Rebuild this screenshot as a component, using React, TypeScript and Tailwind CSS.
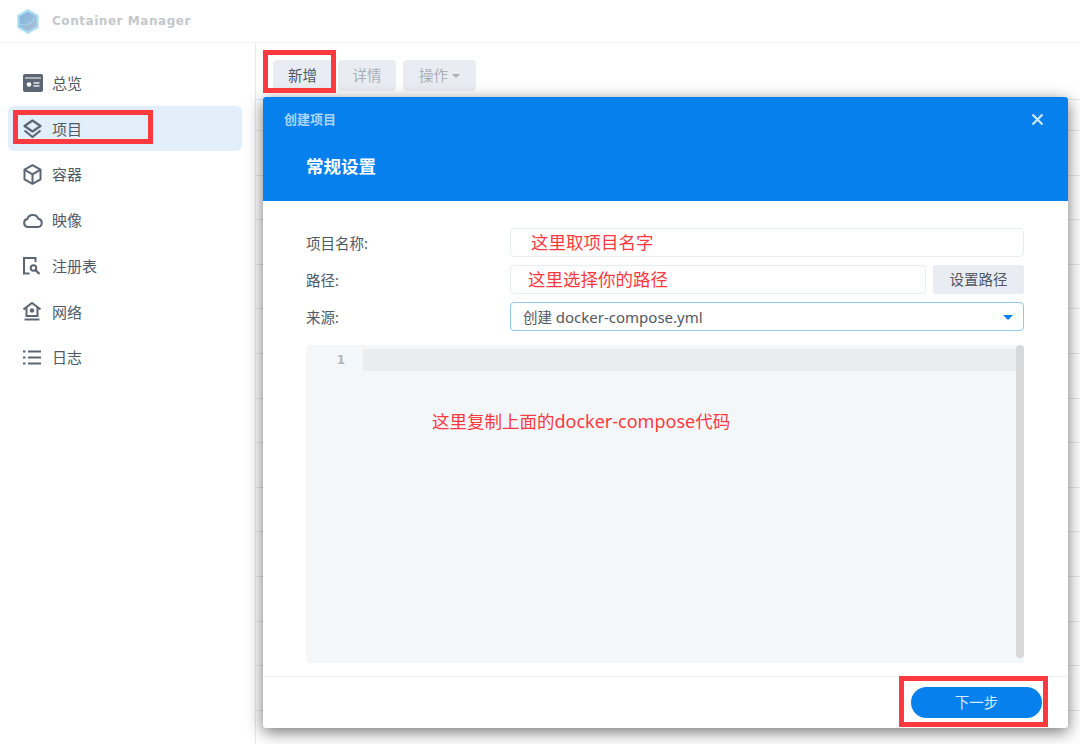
const cjk = '[font-family:"Noto_Sans","Noto_Sans_CJK_SC",sans-serif]';

function OverviewIcon() {
  return (
    <svg width="20" height="18" viewBox="0 0 20 18">
      <rect width="20" height="18" rx="2" fill="#5b6573" />
      <rect x="2" y="3.500" width="16" height="1" fill="#fff" />
      <circle cx="6" cy="10.500" r="2.300" fill="#fff" />
      <rect x="10.500" y="8.300" width="6" height="1.300" fill="#fff" />
      <rect x="10.500" y="11.300" width="6" height="1.300" fill="#fff" />
    </svg>
  );
}

function LayersIcon() {
  return (
    <svg width="19" height="20" viewBox="0 0 19 20" fill="none" stroke="#5b6573" strokeWidth="2.200" strokeLinejoin="round">
      <path d="M9.500 1.500l8 5.500-8 5.500-8-5.500z" />
      <path d="M1.500 11.500l8 6.500 8-6.500" />
    </svg>
  );
}

function BoxIcon() {
  return (
    <svg width="19" height="21" viewBox="0 0 19 21" fill="none" stroke="#5b6573" strokeWidth="2" strokeLinejoin="round">
      <path d="M9.500 1.200l8 4.500v9.600l-8 4.500-8-4.500V5.700z" />
      <path d="M1.800 5.900l7.700 4.500 7.700-4.500M9.500 10.400v9.400" />
    </svg>
  );
}

function CloudIcon() {
  return (
    <svg width="20" height="15" viewBox="0 0 20 15" fill="none" stroke="#5b6573" strokeWidth="2" strokeLinejoin="round">
      <path d="M5 14a4 4 0 0 1-.7-7.900 5.800 5.800 0 0 1 11-.4A4.200 4.200 0 0 1 15 14z" />
    </svg>
  );
}

function RegistryIcon() {
  return (
    <svg width="18" height="18" viewBox="0 0 18 18" fill="none" stroke="#5b6573" strokeWidth="2">
      <path d="M6.500 16.500H1V1h11.500v4" />
      <circle cx="10.500" cy="11" r="2.800" />
      <path d="M12.500 13.200l4 3.800" strokeWidth="2.400" />
    </svg>
  );
}

function NetworkIcon() {
  return (
    <svg width="18" height="19" viewBox="0 0 18 19" fill="none" stroke="#5b6573" strokeWidth="2">
      <path d="M.500 7.500L9 1l8.500 6.500" />
      <path d="M3.500 6v8h11V6" />
      <circle cx="9" cy="8.500" r="2.200" fill="#5b6573" stroke="none" />
      <path d="M1.500 17.500h15" />
    </svg>
  );
}

function ListIcon() {
  return (
    <svg width="18" height="15" viewBox="0 0 18 15" fill="#5b6573">
      <rect x="0" y="0.500" width="2.500" height="2" />
      <rect x="5" y="0.500" width="13" height="2" />
      <rect x="0" y="6.500" width="2.500" height="2" />
      <rect x="5" y="6.500" width="13" height="2" />
      <rect x="0" y="12.500" width="2.500" height="2" />
      <rect x="5" y="12.500" width="13" height="2" />
    </svg>
  );
}

function Logo() {
  return (
    <svg width="22" height="25" viewBox="0 0 24 28" opacity="0.75">
      <defs>
        <linearGradient id="hexFill" x1="0" y1="0" x2="1" y2="1">
          <stop offset="0" stopColor="#4f9fd6" />
          <stop offset="1" stopColor="#9aa9c4" />
        </linearGradient>
      </defs>
      <path d="M12 0l12 7v14l-12 7L0 21V7z" fill="#8fd3f0" />
      <path d="M12 3l9.500 5.500v11L12 25l-9.500-5.500v-11z" fill="url(#hexFill)" />
      <path d="M3 17c6 2 13 0 17-7" fill="none" stroke="#7fc4e4" strokeWidth="1.500" />
    </svg>
  );
}

const navItems = [
  { label: '总览', icon: <OverviewIcon /> },
  { label: '项目', icon: <LayersIcon />, active: true },
  { label: '容器', icon: <BoxIcon /> },
  { label: '映像', icon: <CloudIcon /> },
  { label: '注册表', icon: <RegistryIcon /> },
  { label: '网络', icon: <NetworkIcon /> },
  { label: '日志', icon: <ListIcon /> },
];

const rowLines = Array.from({ length: 14 }, (_, i) => i);

export default function App() {
  return (
    <div className={`relative flex h-[744px] w-[1080px] flex-col overflow-hidden bg-white ${cjk}`}>
      {/* title bar */}
      <header className="flex h-[43px] shrink-0 items-center gap-[13px] border-b border-[#f1f2f4] pl-[17px]">
        <Logo />
        <span className="font-['DejaVu_Sans'] text-[12px] font-bold tracking-[0.55px] text-[#c4c8cd]">Container Manager</span>
      </header>

      <div className="flex min-h-0 flex-1">
        {/* sidebar */}
        <aside className="flex w-[256px] shrink-0 flex-col border-r border-[#e6e8eb] pt-[17px] pl-[8px] pr-[13px]">
          {navItems.map((item) => (
            <div
              key={item.label}
              className={`flex h-[45.7px] items-center rounded-[6px] pl-[15px] pt-[1px] text-[15px] text-[#4f5965] ${item.active ? 'bg-[#e3eefb]' : ''}`}
            >
              <span className="flex w-[29px] shrink-0 items-center">{item.icon}</span>
              {item.label}
            </div>
          ))}
        </aside>

        {/* list behind the dialog */}
        <main className="min-w-0 flex-1">
          <div className="flex h-[57px] items-start border-b border-[#e6e8eb] pl-[17px] pt-[17px] text-[14.5px]">
            <button className="h-[31px] w-[59px] rounded-[4px] bg-[#e9edf3] text-[#4f5965]">新增</button>
            <button className="ml-[6px] h-[31px] w-[58px] rounded-[4px] bg-[#e9edf3] text-[#a9afb8]">详情</button>
            <button className="ml-[7px] flex h-[31px] w-[73px] items-center justify-center gap-[4px] rounded-[4px] bg-[#e9edf3] text-[#a9afb8]">
              操作
              <span className="h-0 w-0 border-x-[4px] border-t-[4px] border-x-transparent border-t-[#a9afb8]" />
            </button>
          </div>
          <div className="h-[31px] border-b border-[#e6e8eb]" />
          {rowLines.map((n) => (
            <div key={n} className="h-[44.6px] border-b border-[#e6e8eb]" />
          ))}
        </main>
      </div>

      {/* dialog */}
      <section className="absolute left-[263px] top-[97px] flex h-[631px] w-[805px] flex-col overflow-hidden rounded-[3px] bg-white shadow-[0_4px_16px_rgba(0,0,0,0.55)]">
        <div className="relative h-[104px] shrink-0 bg-[#0580ed] pl-[21px] pt-[13px] text-white">
          <div className="text-[13px] font-semibold leading-[18px] text-[#a9d5fb]">创建项目</div>
          <div className="mt-[26px] pl-[22px] text-[17.5px] font-bold leading-[24px]">常规设置</div>
          <svg className="absolute right-[24px] top-[16px]" width="13" height="13" viewBox="0 0 13 13" stroke="#cfe6fc" strokeWidth="2.200">
            <path d="M1.500 1.500l10 10M11.500 1.500l-10 10" />
          </svg>
        </div>

        <div className="flex min-h-0 flex-1 flex-col pl-[43px] pr-[44px] pt-[27px] text-[14.5px] text-[#4f5965]">
          <div className="flex h-[29px] items-center">
            <label className="w-[204px] shrink-0 pt-[2px]">项目名称:</label>
            <div className="flex h-full flex-1 items-center rounded-[4px] border border-[#e8edf3] pl-[20px] text-[17.5px] text-[#fb3a3f]">这里取项目名字</div>
          </div>
          <div className="mt-[8px] flex h-[29px] items-center">
            <label className="w-[204px] shrink-0 pt-[2px]">路径:</label>
            <div className="flex h-full flex-1 items-center rounded-[4px] border border-[#e8edf3] pl-[17px] text-[17.5px] text-[#fb3a3f]">这里选择你的路径</div>
            <button className="ml-[7px] h-full w-[91px] rounded-[3px] bg-[#e9edf3] pt-[1px]">设置路径</button>
          </div>
          <div className="mt-[8px] flex h-[29px] items-center">
            <label className="w-[204px] shrink-0 pt-[3px]">来源:</label>
            <div className="flex h-full flex-1 items-center justify-between rounded-[4px] border border-[#8fc7f5] pl-[12px] pr-[10px] pt-[1px]">
              <span>
                创建 <span className="text-[15px]">docker-compose.yml</span>
              </span>
              <span className="h-0 w-0 border-x-[5px] border-t-[5px] border-x-transparent border-t-[#0580ed]" />
            </div>
          </div>

          {/* compose editor */}
          <div className="relative mt-[14px] h-[318px] rounded-[4px] bg-[#f4f7fa] pt-[4px]">
            <div className="flex h-[22px]">
              <span className="flex w-[39px] items-center justify-end font-['DejaVu_Sans'] text-[12px] font-bold text-[#b0b5bb]">1</span>
              <div className="ml-[18px] flex-1 bg-[#ebecee]" />
            </div>
            <div className="pl-[126px] pt-[38px] text-[17.5px] leading-[24px] text-[#fb3a3f]">
              这里复制上面的<span className="text-[18px]">docker-compose</span>代码
            </div>
            <div className="absolute right-0 top-0 h-[313px] w-[8px] rounded-[4px] bg-[#d6d8da]" />
          </div>
        </div>

        <div className="flex h-[52px] shrink-0 items-center justify-end border-t border-[#edf0f4] pr-[26px]">
          <button className="h-[31px] w-[131px] rounded-full bg-[#0580ed] text-[14.5px] text-[#d6eafd]">下一步</button>
        </div>
      </section>

      {/* red annotation boxes */}
      <div className="absolute left-[263px] top-[50px] h-[43px] w-[73px] border-[5px] border-[#fb3a3f]" />
      <div className="absolute left-[13px] top-[110px] h-[34px] w-[140px] border-[5px] border-[#fb3a3f]" />
      <div className="absolute left-[899px] top-[676px] h-[51px] w-[149px] border-[5px] border-[#fb3a3f]" />
    </div>
  );
}
